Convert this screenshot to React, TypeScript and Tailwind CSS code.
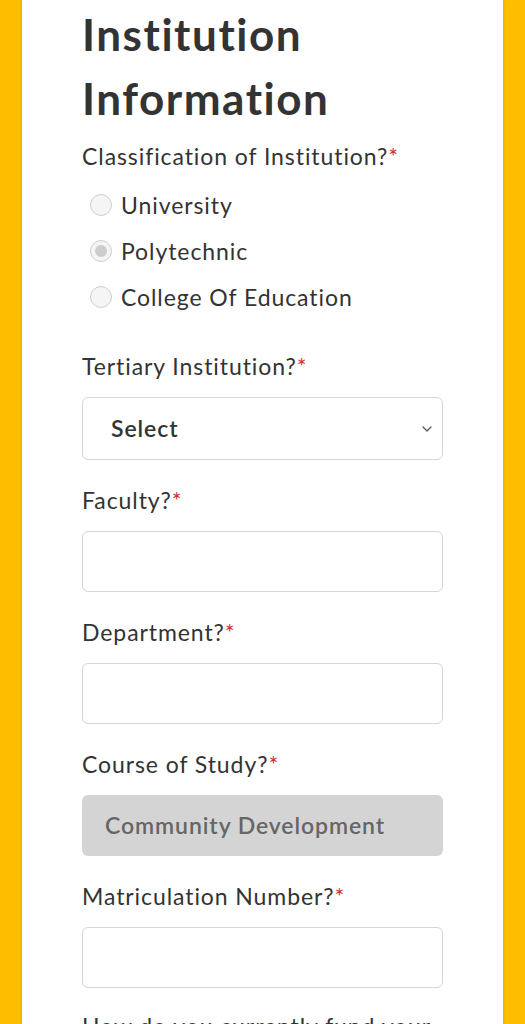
import React from "react";

const font = { fontFamily: "Lato, 'Noto Sans', sans-serif" };

const Label = ({ text }: { text: string }) => (
    <p className="text-[23px] leading-[28px] tracking-[0.04em] text-[#333]">
        {text}
        <span className="text-[#d32f2f]">*</span>
    </p>
);

const Radio = ({ label, checked }: { label: string; checked?: boolean }) => (
    <div className="flex items-center h-[46px] pl-[8px]">
        <span className="w-[22px] h-[22px] rounded-full border border-[#cfcfcf] bg-[#f5f5f5] flex items-center justify-center">
            {checked && <span className="w-[12px] h-[12px] rounded-full bg-[#cdcdcd]" />}
        </span>
        <span className="ml-[9px] text-[23px] tracking-[0.04em] text-[#333]">{label}</span>
    </div>
);

const TextBox = () => (
    <div className="h-[61px] rounded-[6px] border border-[#d6d6d6] bg-white" />
);

export default function App() {
    return (
        <div className="min-h-screen bg-[#fdbe00] px-[22px]" style={font}>
            <div className="bg-white pl-[60px] pr-[60px] pb-10 shadow-[0_0_3px_rgba(0,0,0,0.15)]">
                <h2 className="text-[44px] leading-[64px] font-bold tracking-[0.035em] text-[#333] pt-[2px]">
                    Institution
                    <br />
                    Information
                </h2>

                <div className="mt-[12px]">
                    <Label text="Classification of Institution?" />
                </div>
                <div className="mt-[12px]">
                    <Radio label="University" />
                    <Radio label="Polytechnic" checked />
                    <Radio label="College Of Education" />
                </div>

                <div className="mt-[32px]">
                    <Label text="Tertiary Institution?" />
                </div>
                <div className="mt-[17px] h-[63px] rounded-[6px] border border-[#d6d6d6] flex items-center justify-between pl-[28px] pr-[7px]">
                    <span className="text-[23px] font-semibold tracking-[0.04em] text-[#333]">Select</span>
                    <svg width="16" height="16" viewBox="0 0 24 24" fill="none" stroke="#555" strokeWidth="1.8" strokeLinecap="round" strokeLinejoin="round">
                        <path d="m6 9 6 6 6-6" />
                    </svg>
                </div>

                <div className="mt-[26px]">
                    <Label text="Faculty?" />
                </div>
                <div className="mt-[17px]">
                    <TextBox />
                </div>

                <div className="mt-[26px]">
                    <Label text="Department?" />
                </div>
                <div className="mt-[17px]">
                    <TextBox />
                </div>

                <div className="mt-[26px]">
                    <Label text="Course of Study?" />
                </div>
                <div className="mt-[17px] h-[61px] rounded-[6px] bg-[#d4d4d4] flex items-center pl-[23px]">
                    <span className="text-[23px] font-semibold tracking-[0.04em] text-[#666]">Community Development</span>
                </div>

                <div className="mt-[26px]">
                    <Label text="Matriculation Number?" />
                </div>
                <div className="mt-[17px]">
                    <TextBox />
                </div>

                <div className="mt-[24px]">
                    <Label text="How do you currently fund your education?" />
                </div>
            </div>
        </div>
    );
}
